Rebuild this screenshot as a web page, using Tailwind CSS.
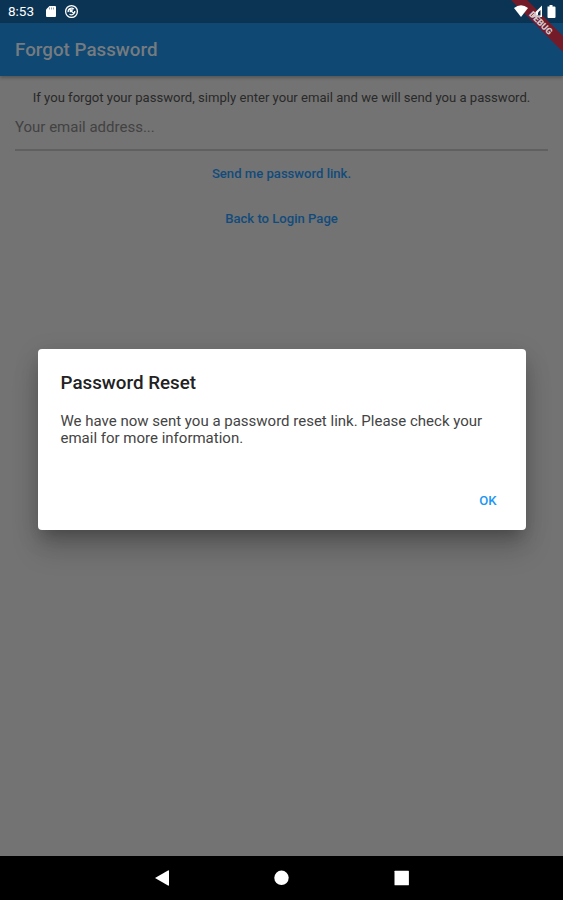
<!DOCTYPE html>
<html lang="en">
<head>
    <meta charset="UTF-8">
    <meta name="viewport" content="width=device-width, initial-scale=1.0">
    <title>Forgot Password</title>
    <script src="https://cdn.jsdelivr.net/npm/@tailwindcss/browser@4"></script>
</head>
<body class="font-[Roboto,sans-serif]">
    <div class="relative flex flex-col w-[563px] h-[900px] bg-[#737373] overflow-hidden">
        <!-- status bar -->
        <div class="h-[23px] shrink-0 bg-[#0b3454] flex items-center px-2 text-white">
            <span class="w-[37px] pt-px text-[13.500px] leading-none">8:53</span>
            <svg class="w-[12px] h-[13px]" viewBox="0 0 12 13">
                <path fill="#fff" d="M4.500 1H10q1 0 1 1v9q0 1-1 1H2q-1 0-1-1V4.500z"/>
                <path stroke="#8ea3b4" d="M4.500 2.500v2M6.500 2.500v2M8.500 2.500v2"/>
            </svg>
            <svg class="ml-[7px] w-[15px] h-[15px]" viewBox="0 0 15 15" fill="none" stroke="#fff">
                <circle cx="7.500" cy="7.500" r="5.900" stroke-width="1.300"/>
                <path stroke-width="1.300" d="M4.200 8.200a3.400 3.400 0 0 1 5.700-3.100M10.800 7a3.400 3.400 0 0 1-5.300 3.200M6 6.300l3.800 3M6.300 8.300V6h2.600"/>
            </svg>
            <svg class="relative z-10 ml-auto -mr-[5px] w-[46px] h-[18px]" viewBox="0 0 46 18">
                <path fill="#fff" d="M0 5Q7-.5 14 5L7 14z"/>
                <path fill="#fff" d="M28 2.500V14H16.500z"/>
                <path fill="#0b2440" d="M26.500 7v5.500H24V9.500z"/>
                <path fill="#fff" d="M33.500 3.500h2V2h3v1.500h2q1 0 1 1V14q0 1-1 1h-6q-1 0-1-1V4.500z"/>
            </svg>
        </div>
        <!-- app bar -->
        <div class="h-[53px] shrink-0 bg-[#0f4872] flex items-center px-[15px] pt-[2px] shadow-[0_2px_3px_rgba(0,0,0,0.25)]">
            <h1 class="text-[18.8px] font-medium text-[#757b80]">Forgot Password</h1>
        </div>
        <!-- form -->
        <div class="flex-1 flex flex-col px-[15px] pt-[14px]">
            <p class="text-center text-[13.1px] leading-4 text-[#292929] whitespace-nowrap">If you forgot your password, simply enter your email and we will send you a password.</p>
            <div class="mt-2 h-[37px] pt-1 border-b-2 border-[#606060] text-[15px] leading-[19px] text-[#424242]">Your email address...</div>
            <button class="mt-[15px] self-center text-[13.1px] leading-4 font-medium text-[#114b7c]">Send me password link.</button>
            <button class="mt-[29px] self-center text-[13.1px] leading-4 font-medium text-[#114b7c]">Back to Login Page</button>
        </div>
        <!-- navigation bar -->
        <div class="h-[44px] shrink-0 bg-black flex justify-center items-center gap-[104px]">
            <svg class="w-4 h-4" viewBox="0 0 16 16" fill="#fff"><path d="M1 8 14 .5Q15 0 15 1v14q0 1-1 .5z"/></svg>
            <svg class="w-4 h-4" viewBox="0 0 16 16" fill="#fff"><circle cx="7.500" cy="7.800" r="7.200"/></svg>
            <svg class="w-4 h-4" viewBox="0 0 16 16" fill="#fff"><rect x=".5" y=".7" width="14.400" height="14.600" rx=".5"/></svg>
        </div>
        <!-- debug ribbon -->
        <svg class="absolute top-0 right-0 w-[56px] h-[56px]" viewBox="0 0 56 56">
            <path fill="#741b2a" d="M4 0H20L56 36V52z"/>
        </svg>
        <svg class="absolute z-20 top-0 right-0 w-[56px] h-[56px]" viewBox="0 0 56 56">
            <text x="33.500" y="26" transform="rotate(45 33.500 23.500)" text-anchor="middle" font-family="Roboto" font-size="9" font-weight="900" fill="#d6c8cc" stroke="#5a2030" stroke-width=".4" paint-order="stroke">DEBUG</text>
        </svg>
        <!-- dialog -->
        <div class="absolute left-[37.500px] top-[348.500px] w-[488px] h-[181px] rounded-[4px] bg-white flex flex-col px-[23px] pt-[22px] shadow-[0_10px_14px_-6px_rgba(0,0,0,0.2),0_20px_28px_0px_rgba(0,0,0,0.16),0_6px_24px_2px_rgba(0,0,0,0.1)]">
            <h2 class="text-[18.8px] leading-[25px] font-medium text-[#222]">Password Reset</h2>
            <p class="mt-[17px] text-[15px] leading-[17.600px] text-[#444]">We have now sent you a password reset link. Please check your email for more information.</p>
            <button class="mt-[45px] mr-[6px] self-end text-[13.1px] leading-4 font-medium text-[#2196f3]">OK</button>
        </div>
    </div>
</body>
</html>
